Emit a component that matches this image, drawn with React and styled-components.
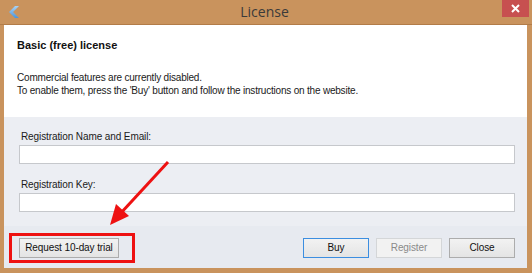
import React from 'react'
import styled, { createGlobalStyle } from 'styled-components'

const Global = createGlobalStyle`
html, body {
  margin: 0;
  padding: 0;
  background: #c9935d;
}
`

const App = () => {
    return (
        <Window>
            <Global />
            <TitleBar>
                <BackButton>
                    <svg width="14" height="14" viewBox="0 0 14 14">
                        <defs>
                            <linearGradient id="bk" x1="0" y1="0" x2="0" y2="1">
                                <stop offset="0" stopColor="#a9d3f5" />
                                <stop offset="1" stopColor="#4a95dc" />
                            </linearGradient>
                        </defs>
                        <polygon points="8,1 12,1 6,7 12,13 8,13 2,7" fill="url(#bk)" />
                    </svg>
                </BackButton>
                <Title>License</Title>
                <CloseButton>
                    <svg width="9" height="9" viewBox="0 0 9 9">
                        <path d="M1 1 L8 8 M8 1 L1 8" stroke="#fff" strokeWidth="2" />
                    </svg>
                </CloseButton>
            </TitleBar>
            <Client>
                <Header>
                    <Heading>Basic (free) license</Heading>
                    <Info>
                        Commercial features are currently disabled.<br />
                        To enable them, press the 'Buy' button and follow the instructions on the website.
                    </Info>
                </Header>
                <Form>
                    <Field>
                        <Label>Registration Name and Email:</Label>
                        <Input />
                    </Field>
                    <Field>
                        <Label>Registration Key:</Label>
                        <Input />
                    </Field>
                </Form>
                <Footer>
                    <Button wide>Request 10-day trial</Button>
                    <Spacer />
                    <Button primary>Buy</Button>
                    <Button disabled>Register</Button>
                    <Button>Close</Button>
                </Footer>
            </Client>
            <Highlight />
            <Arrow width="80" height="80" viewBox="0 0 80 80">
                <line x1="66" y1="2" x2="18" y2="54" stroke="#ee1111" strokeWidth="3" />
                <polygon points="8,65 14,44 27,56" fill="#ee1111" />
            </Arrow>
        </Window>
    )
}

export default App

const Window = styled.div`
position: relative;
width: 532px;
height: 273px;
background: #c9935d;
display: flex;
flex-direction: column;
overflow: hidden;
font-family: "Liberation Sans", Arial, sans-serif;
`
const TitleBar = styled.div`
height: 24px;
display: flex;
align-items: flex-start;
border-bottom: 1px solid #b27c48;
`
const BackButton = styled.div`
width: 14px;
height: 14px;
margin: 5px 0 0 7px;
`
const Title = styled.div`
flex: 1;
text-align: center;
font-family: "Open Sans", "Noto Sans", sans-serif;
font-size: 14px;
color: #3a3a3a;
line-height: 24px;
padding-left: 6px;
`
const CloseButton = styled.div`
width: 27px;
height: 17px;
margin-right: 3px;
background: #c75050;
display: flex;
align-items: center;
justify-content: center;
`
const Client = styled.div`
flex: 1;
margin: 0 5px 5px 4px;
display: flex;
flex-direction: column;
background: #fff;
`
const Header = styled.div`
height: 92px;
padding: 14px 0 0 13px;
box-sizing: border-box;
background: #fff;
`
const Heading = styled.div`
font-weight: bold;
font-size: 11px;
color: #111;
line-height: 13px;
`
const Info = styled.div`
margin-top: 19px;
font-size: 10px;
letter-spacing: -0.2px;
line-height: 13px;
color: #1a1a1a;
`
const Form = styled.div`
height: 109px;
box-sizing: border-box;
background: #eceef3;
padding: 13px 12px 0 15px;
display: flex;
flex-direction: column;
gap: 14px;
`
const Field = styled.div`
display: flex;
flex-direction: column;
gap: 2px;
`
const Label = styled.div`
font-size: 10px;
letter-spacing: -0.1px;
line-height: 13px;
padding-left: 2px;
color: #1a1a1a;
`
const Input = styled.div`
height: 17px;
background: #fff;
border: 1px solid #c6c8cc;
`
const Footer = styled.div`
flex: 1;
background: #e7eaf0;
display: flex;
align-items: center;
padding: 1px 12px 0 15px;
gap: 7px;
`
const Spacer = styled.div`
flex: 1;
`
const Button = styled.div`
width: ${p => (p.wide ? '98px' : '64px')};
height: 18px;
box-sizing: content-box;
display: flex;
align-items: center;
justify-content: center;
font-size: 10px;
letter-spacing: -0.1px;
color: ${p => (p.disabled ? '#8a8a8a' : '#111')};
background: ${p => (p.disabled ? '#f2f2f2' : 'linear-gradient(#f2f2f2, #e4e4e4)')};
border: 1px solid ${p => (p.primary ? '#3c8ee0' : p.disabled ? '#d4d6d8' : '#acacac')};
`
const Highlight = styled.div`
position: absolute;
left: 9px;
top: 233px;
width: 120px;
height: 24px;
border: 3px solid #ee1111;
`
const Arrow = styled.svg`
position: absolute;
left: 102px;
top: 160px;
`
